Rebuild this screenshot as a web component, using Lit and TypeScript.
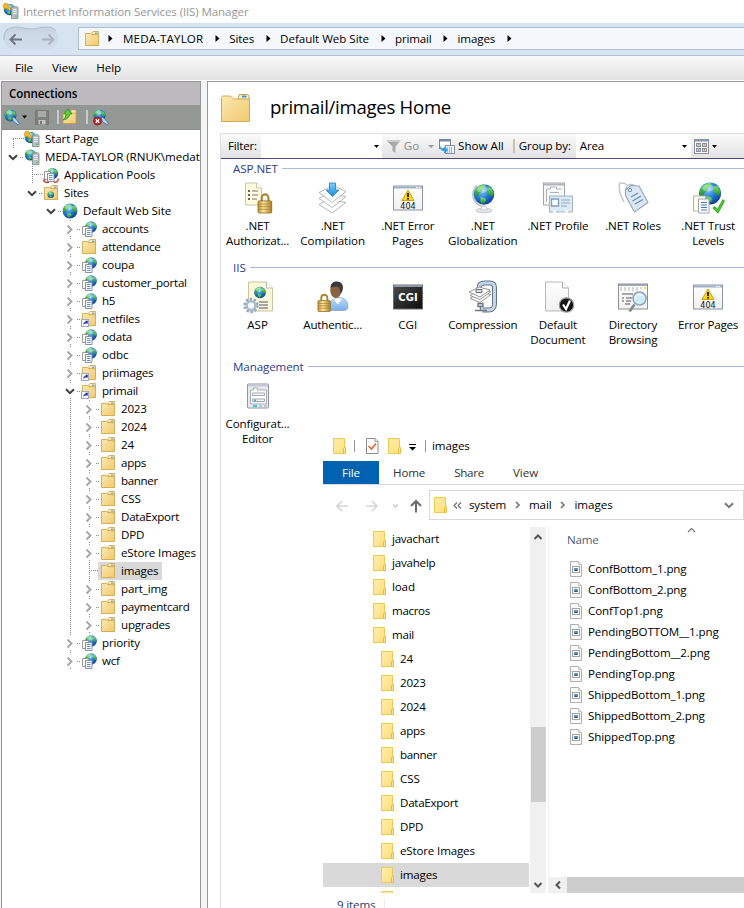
import { LitElement, html, css, svg, nothing } from "lit";
import { customElement, property } from "lit/decorators.js";

const ADV: Record<string, number> = {
  a: 509, b: 588, c: 462, d: 589, e: 523, f: 313, g: 589, h: 566, i: 242, j: 242, k: 497, l: 242, m: 861,
  n: 566, o: 586, p: 589, q: 589, r: 348, s: 424, t: 339, u: 566, v: 479, w: 723, x: 459, y: 484, z: 452,
  A: 645, B: 573, C: 619, D: 701, E: 506, F: 488, G: 686, H: 710, I: 266, J: 357, K: 580, L: 471, M: 898,
  N: 748, O: 754, P: 560, Q: 754, R: 598, S: 531, T: 524, U: 687, V: 621, W: 934, X: 590, Y: 553, Z: 570,
  " ": 274, ".": 217, ":": 217, "-": 400, _: 415, "/": 390, "\\": 380, "(": 302, ")": 302,
};

@customElement("ui-text")
class UiText extends LitElement {
  @property() t = "";
  @property({ type: Number }) size = 12;
  @property({ type: Number }) k = 1;
  static styles = css`
    :host { display: inline-block; white-space: pre; flex: none; }
    span { display: inline-block; }
  `;
  render() {
    return html`<span>${this.t}</span>`;
  }
  updated() {
    const s = this.renderRoot.querySelector("span") as HTMLElement;
    s.style.letterSpacing = "0";
    const want = ([...this.t].reduce((n, c) => n + (ADV[c] ?? 539), 0) * this.size * this.k) / 1000;
    const have = s.getBoundingClientRect().width;
    s.style.letterSpacing = (want - have) / this.t.length + "px";
  }
}

const T = (t: string, size = 12, k = 1) => html`<ui-text .t=${t} .size=${size} .k=${k}></ui-text>`;
const pic = (w: number, h: number, body: unknown) =>
  html`<svg class="pic" width=${w} height=${h} viewBox="0 0 ${w} ${h}">${body}</svg>`;

/* Unit globe drawn on a circle of radius 7 and placed by transform. */
const globe = (cx: number, cy: number, r: number) => svg`<g transform="translate(${cx} ${cy}) scale(${r / 7})">
  <circle r="7" fill="url(#sea)"/>
  <path d="M-6.2 -2.5 C-5 -5.5 -2 -7 .4 -6.7 L1 -5 L-1 -3.8 L-1.5 -1.6 L-3.6 -.6 L-4.2 1.4 L-6.4 1Z" fill="url(#land)"/>
  <path d="M2.4 -5 L5 -4.4 L6.6 -1.2 L5.8 1.4 L3.6 .6 L2.2 -1.4Z" fill="url(#land)"/>
  <path d="M-2.4 1.8 L.6 2.4 L1.6 4 L-.4 6.4 L-2.4 5.6Z" fill="url(#land)"/>
  <ellipse cx="-1.2" cy="-3.4" rx="3.6" ry="2.2" fill="#fff" opacity=".38"/></g>`;

const folderBody = svg`<path d="M8 1.500l1-1h5.500v3.500H8z" fill="#f9eab8" stroke="#c9a048" stroke-width=".8"/><path d="M11 2.200h2.500" stroke="#4a90d9"/>
  <path d="M1.500 2.500h5.200l1.300 1.200h6.500v10.800h-13z" fill="url(#fold)" stroke="#d0a850" stroke-width=".9"/>`;
const linkBadge = svg`<rect x=".5" y="8.500" width="7" height="7" fill="#f3f4fb" stroke="#a3a9c4"/><path d="M2.300 14c0-2 .8-3 2.200-3V9.800H6.800V12.500L5.500 12.400C3.500 12.300 2.900 12.900 2.300 14z" fill="#24339c"/>`;
const server = svg`<path d="M8.500 4.500l5-1 1.500 1v11l-6.500.2z" fill="#b9bec4" stroke="#7e868f" stroke-width=".8"/><path d="M10 6.500h3.600M10 8.500h3.600M10 10.500h3.600" stroke="#f2f4f6" stroke-width=".9"/><rect x="12" y="12.500" width="2" height="1.500" fill="#4fd44a"/>`;
const pages = (dy = 0) => svg`<g transform="translate(0 ${dy})"><path d="M1.500 5.500h6v8h-6z" fill="#fff" stroke="#8b9099" stroke-width=".9"/><path d="M4.500 7.500h6.500v8H4.500z" fill="#fff" stroke="#7f858e" stroke-width=".9"/><path d="M6 9.500h3.600M6 11.500h3.600M6 13.500h3.600" stroke="#4f82c4" stroke-width=".9"/></g>`;

const small: Record<string, unknown> = {
  start: svg`${globe(6.5, 6.5, 5.8)}<path d="M0 2.500L2 0l3 1 .5 2.500L8 6 6.500 7.500 3.600 5.200 1 5.500z" fill="#f6b92c" stroke="#c98410" stroke-width=".6"/>${server}`,
  server: svg`${globe(6.5, 6, 5.6)}${server}`,
  pools: svg`${globe(9.5, 6.5, 5.6)}${pages(-1)}<path d="M1.500 11.500C-.5 15 3 15.800 6 15.300M15 11.500c1 2.500-1 4-4 3.800" fill="none" stroke="#c64b3d" stroke-width="1.500"/>`,
  sites: svg`${folderBody}${globe(7.8, 9.8, 3.3)}`,
  globe: globe(8, 8, 7.4),
  app: svg`${globe(10, 6, 5.8)}${pages()}`,
  folder: folderBody,
  link: svg`${folderBody}${linkBadge}`,
};

type Node = [level: number, icon: string, text: string, state: "" | "o" | "c" | "s"];
const TREE: Node[] = [
  [0, "start", "Start Page", ""],
  [0, "server", "MEDA-TAYLOR (RNUK\\medataylor)", "o"],
  [1, "pools", "Application Pools", ""],
  [1, "sites", "Sites", "o"],
  [2, "globe", "Default Web Site", "o"],
  [3, "app", "accounts", "c"], [3, "folder", "attendance", "c"], [3, "app", "coupa", "c"],
  [3, "app", "customer_portal", "c"], [3, "app", "h5", "c"], [3, "link", "netfiles", "c"],
  [3, "app", "odata", "c"], [3, "app", "odbc", "c"], [3, "link", "priimages", "c"], [3, "link", "primail", "o"],
  ...["2023", "2024", "24", "apps", "banner", "CSS", "DataExport", "DPD", "eStore Images", "images", "part_img", "paymentcard", "upgrades"]
    .map((n): Node => [4, "folder", n, n === "images" ? "s" : "c"]),
  [3, "app", "priority", "c"], [3, "app", "wcf", "c"],
];

const errorPage = svg`<rect x="1.500" y="4.500" width="29" height="24" fill="url(#paper)" stroke="#8b94a5"/><path d="M2 6h28" stroke="#9fb0c9" stroke-width="2"/><path d="M24 6h1.500M26.500 6H28" stroke="#fff"/>
  <path d="M16 8.500l6 10.500H10z" fill="#fbd71e" stroke="#d2a000" stroke-linejoin="round"/><path d="M16 11.500v4" stroke="#1b1b1b" stroke-width="1.800"/><circle cx="16" cy="17.300" r="1" fill="#1b1b1b"/>
  <text x="16" y="27.300" text-anchor="middle" font-size="8" font-family="DejaVu Sans, sans-serif" fill="#111">404</text>`;
const lock = svg`<path d="M4.500 8V5a3.200 3.200 0 0 1 6.400 0V8" fill="none" stroke="#a9822d" stroke-width="2"/><rect x="1" y="8" width="13" height="11.500" rx="1" fill="url(#gold)" stroke="#8f6a1d" stroke-width=".8"/><path d="M1 11h13M1 13.500h13M1 16h13" stroke="#a27a24" stroke-width=".7"/>`;

const big: Record<string, unknown> = {
  auth: svg`<path d="M3.500 1.500h11l5 5v17h-16z" fill="#fff9df" stroke="#c9c5a8"/><path d="M14.500 1.500v5h5" fill="#fff" stroke="#c9c5a8"/><path d="M6 9.500h2M6 13.500h2M6 17.500h2" stroke="#333" stroke-width="1.700"/><path d="M10 9.500h6M10 13.500h6M10 17.500h5" stroke="#777"/><g transform="translate(15 11) scale(1.050)">${lock}</g>`,
  comp: svg`<g stroke="#a9acb0" fill="#fff" stroke-width=".9" stroke-linejoin="round"><path d="M2 23l9-5 18 3-14 10.500z"/><path d="M2 17l9-5 18 3-14 11z"/><path d="M2 11l14-7 13 6-14 11z"/></g><path d="M12.500 1.500h6v7h3.500L15.500 15 9 8.500h3.500z" fill="url(#arrow)" stroke="#2f86bd" stroke-width=".9"/>`,
  error: errorPage,
  globalz: svg`<path d="M10 4A12 12 0 0 0 18 25" fill="none" stroke="#c3c6cb" stroke-width="2"/>${globe(17, 13, 10.2)}<ellipse cx="17" cy="29" rx="8" ry="2.300" fill="#e3e5e8" stroke="#b9bcc1" stroke-width=".7"/><path d="M15 24.500h4l1.500 4h-7z" fill="#f2f3f4" stroke="#b9bcc1" stroke-width=".6"/>`,
  profile: svg`<rect x="1.500" y="1.500" width="21" height="22" fill="#f7f8f8" stroke="#a3a7ac"/><path d="M2 3h20" stroke="#b1b6bb" stroke-width="2"/><path d="M4.500 7.500h4v-2h6v2h5M4.500 7.500v13M8 11h9M8 15h4M8 18h3" fill="none" stroke="#b0b4b9"/><rect x="7.500" y="14.500" width="23" height="16" fill="#dceaf5" stroke="#a5b4c2"/><path d="M9.500 17.500h7v7h-7z" fill="#fff" stroke="#83a0ba" stroke-width="1.400"/><path d="M19 18.500h9M19 21.500h9M19 24.500h6" stroke="#93a8ba"/><path d="M11 30h3M23 30h3" stroke="#fff" stroke-width="2"/>`,
  roles: svg`<path d="M2.500 2c3-1 6 0 8 2M2.500 2C1 8 4 15 7 20.500M9 12V6c1-3 4-4 9-2" fill="none" stroke="#c3c6c9" stroke-width="1.500"/><path d="M8.500 8.500l5-4.500 8.500.5 9 16.500-13.500 9.500L8.500 14z" fill="#d9e8f4" stroke="#93a6b8" stroke-width="1.100"/><circle cx="13" cy="8.500" r="1.700" fill="#fff" stroke="#6d89a3"/><path d="M14 15.500l7-4M15.500 19.500l8.500-5M18 22.500l8-4.500" stroke="#6f8cad" stroke-width="1.300"/>`,
  trust: svg`${globe(18, 12, 11)}<path d="M1.500 14.500h12v15h-12z" fill="#fffbee" stroke="#b8b09d"/><path d="M6.500 17.500h10.500v14H6.500z" fill="#fff" stroke="#9fa4ab"/><path d="M9 21h6M9 23.500h6M9 26h6M9 28.500h6" stroke="#3f7ac7"/><path d="M21 26.500l2-1.500 2.500 3L31 18l1.500 1.500L26 31.500z" fill="#45d22e" stroke="#1d9415" stroke-width=".8"/>`,
  asp: svg`<path d="M6.500 1.500h18l6 6v23h-24z" fill="#fdf7d9" stroke="#c9c3a3"/><path d="M24.500 1.500v6h6" fill="#fff" stroke="#b9b8ae"/>${globe(18, 12, 5.8)}<path d="M17 21.500h9M17 24.500h9M17 27.500h9" stroke="#53507e"/><circle cx="9" cy="25" r="6.200" fill="none" stroke="#8fa7bd" stroke-width="3" stroke-dasharray="2.200 1.700"/><circle cx="9" cy="25" r="4.300" fill="#fff" stroke="#a4bbd0" stroke-width="2.400"/>`,
  authn: svg`<path d="M12 30v-6c1-4 5-7 10-7 6 0 9 4 9 9 0 3-2 4-5 4z" fill="url(#shirt)" stroke="#6e9cca" stroke-width=".6"/><path d="M16 18h9l-4 6z" fill="#fff"/><ellipse cx="18.800" cy="9.500" rx="5.600" ry="8" fill="#8a6242"/><path d="M13.500 7C14 2 17 .8 20 1c5 0 7 4 5.500 9l-2 4c0-4-1-7-3-8z" fill="#3b3b3b"/><g transform="translate(0 12.500) scale(.95)">${lock}</g>`,
  cgi: svg`<rect x="1.500" y="4.500" width="29" height="24" fill="url(#dark)" stroke="#6a6a6a"/><path d="M2 5.500h28" stroke="#8f98a8" stroke-width="2"/><text x="16" y="20" text-anchor="middle" font-size="10" font-weight="bold" font-family="DejaVu Sans, sans-serif" fill="#fff">CGI</text>`,
  compress: svg`<path d="M12 10V7c0-3 2-4.500 6-4.500h5c3 0 4.500 1.500 4.500 4.500v16c0 5-2 6.500-6 6.500h-6" fill="none" stroke="#60758f" stroke-width="5"/><path d="M12 10V7c0-3 2-4.500 6-4.500h5c3 0 4.500 1.500 4.500 4.500v16c0 5-2 6.500-6 6.500h-6" fill="none" stroke="#c5d5e5" stroke-width="3"/><g fill="#fff" stroke="#8a8a8a" stroke-width=".9"><path d="M3 18l10-6 11 2-11 8z"/><path d="M3 15l10-6 11 2-11 8z"/><path d="M2 11.500l10-5 11 3-10 7z"/></g><path d="M9 9h6v3H9z" fill="#d5dce3" stroke="#68717c"/><path d="M11 23h5v3h-5zM13.500 26v4M8 30h12" stroke="#6b7784" fill="#dbe1e8" stroke-width="1.400"/>`,
  doc: svg`<path d="M3.500 1.500h17l6 6v23h-23z" fill="url(#paper)" stroke="#b9b9b9"/><path d="M20.500 1.500v6h6" fill="#fff" stroke="#a9a9a9"/><circle cx="24.500" cy="24.500" r="7.200" fill="#151515" stroke="#999" stroke-width="1.200"/><path d="M21 24l3 4.500L28 20" fill="none" stroke="#fff" stroke-width="2.200"/>`,
  browse: svg`<rect x="1.500" y="3.500" width="29" height="25" fill="url(#paper)" stroke="#8b8f93"/><path d="M2 4.500h28" stroke="#9da6b2" stroke-width="2"/><path d="M3 7.500h22M3 9.500h18" stroke="#b0b0b0" stroke-width="1.200" stroke-dasharray="2 2"/><circle cx="28" cy="7.500" r="1.300" fill="#ffd83a"/><path d="M5 13.500h11M5 17.500h2M9 17.500h6M5 20.500h2M9 20.500h5M8 23.500h5" stroke="#555" stroke-width="1.200"/><path d="M17.500 24l-5 7" stroke="#85898e" stroke-width="2.600"/><circle cx="22.500" cy="18" r="6.500" fill="#d0ebfb" stroke="#93a5b3" stroke-width="1.500"/><path d="M18.500 17c1-3 4-4 7-2" fill="none" stroke="#fff" stroke-width="1.500"/>`,
  config: svg`<rect x="5.500" y="4.500" width="21" height="24" rx="1" fill="#e6ebf0" stroke="#8f969e"/><path d="M6 6h20" stroke="#c5cbd2" stroke-width="2"/><path d="M8.500 10.500h3v-2h4v2h9v14h-16z" fill="#fff" stroke="#a5acb3"/><path d="M10.500 13.500h12v2.500h-12zM10.500 19.500h12v2.500h-12z" fill="#f4f6f8" stroke="#a0a9b3"/><path d="M12 20.700h2" stroke="#1db5f0" stroke-width="1.500"/><path d="M11 26.500h4" stroke="#00b9f2" stroke-width="1.500"/><path d="M17 26.500h3M22 26.500h3" stroke="#b4babf" stroke-width="1.500"/>`,
};

const GROUPS: [string, [string, string[]][]][] = [
  ["ASP.NET", [["auth", [".NET", "Authorizat..."]], ["comp", [".NET", "Compilation"]], ["error", [".NET Error", "Pages"]], ["globalz", [".NET", "Globalization"]], ["profile", [".NET Profile"]], ["roles", [".NET Roles"]], ["trust", [".NET Trust", "Levels"]]]],
  ["IIS", [["asp", ["ASP"]], ["authn", ["Authentic..."]], ["cgi", ["CGI"]], ["compress", ["Compression"]], ["doc", ["Default", "Document"]], ["browse", ["Directory", "Browsing"]], ["error", ["Error Pages"]]]],
  ["Management", [["config", ["Configurat...", "Editor"]]]],
];

const exFolder = html`<svg class="pic" width="13" height="16" viewBox="0 0 13 16"><path d="M.5.500h11v15H.5z" fill="url(#exf)" stroke="#eccb52"/><path d="M10.500 15.500v-5l1-1h1v6z" fill="#ffe590" stroke="#e5bd3d"/></svg>`;
const EX_TREE: [number, string][] = [
  ...["javachart", "javahelp", "load", "macros", "mail"].map((n): [number, string] => [0, n]),
  ...["24", "2023", "2024", "apps", "banner", "CSS", "DataExport", "DPD", "eStore Images", "images", ""].map((n): [number, string] => [1, n]),
];
const FILES = ["ConfBottom_1.png", "ConfBottom_2.png", "ConfTop1.png", "PendingBOTTOM__1.png", "PendingBottom__2.png", "PendingTop.png", "ShippedBottom_1.png", "ShippedBottom_2.png", "ShippedTop.png"];
const fileIcon = pic(12, 16, svg`<path d="M.5.500h8l3 3v12H.5z" fill="#f9f9f9" stroke="#b0b0b0"/><path d="M8.500 .5v3h3" fill="#e4e4e4" stroke="#c4c4c4"/><rect x="2.500" y="5.500" width="7" height="6" fill="#fff" stroke="#a2a2a2"/><rect x="4" y="7" width="4" height="3" fill="#5b93c4"/><path d="M4 10l2-1.500L8 10z" fill="#2d5a58"/>`);

const play = pic(26, 9, svg`<path d="M12.500 1l4 3.500-4 3.500z" fill="#000"/>`);
const chevDown = (c: string) => pic(10, 7, svg`<path d="M1 1.200l4 4 4-4" fill="none" stroke=${c} stroke-width="2"/>`);
const chevRight = pic(7, 9, svg`<path d="M1.500 .5l4 4-4 4" fill="none" stroke="#a6a6a6" stroke-width="1.900"/>`);
const plugGlobe = svg`${globe(6.5, 6.5, 6)}<path d="M8 8l3 1 2.500 3 2 2.500-1.500 1.200-2.800-2L9 12z" fill="#b9d4ec" stroke="#4276a9" stroke-width=".9"/>`;

@customElement("app-root")
class AppRoot extends LitElement {
  static styles = css`
    :host { display: block; width: 744px; height: 908px; overflow: hidden; position: relative; background: #fff; color: #000;
      font: 11.6px/18px "Open Sans", "Noto Sans", sans-serif; }
    * { box-sizing: border-box; }
    .pic { display: block; flex: none; overflow: visible; }
    .defs { position: absolute; }
    .title, .address, .crumbs, .menu, .tools, .filter { display: flex; align-items: center; }
    .title { height: 23px; padding: 0 0 0 3px; gap: 4px; color: #979797; }
    .address { height: 33px; background: #d6e3f1; border-bottom: 1px solid #b0bfd2; }
    .nav { width: 78px; display: flex; align-items: center; }
    .crumbs { flex: 1; height: 23px; margin-bottom: 1px; padding-left: 5px; border: 1px solid #afbfd6; border-right: 0; background: #f4f8fc; }
    .menu { height: 25px; padding-left: 15px; background: linear-gradient(#fafafa, #e3e2e3); border-bottom: 1px solid #fff; }
    .menu ui-text { margin-right: 19px; }
    .body { display: flex; height: 827px; background: #f5f4f5; padding-left: 1px; }
    .left { width: 200px; border: 1px solid #939793; border-bottom: 0; background: #fff; overflow: hidden; }
    .head { height: 23px; line-height: 23px; padding-left: 7px; font-weight: 600; background: #bcbabc; }
    .tools { height: 25px; background: #949894; padding-left: 2px; border-bottom: 1px solid #8a8d8a; }
    .trow { display: flex; align-items: center; height: 18px; padding-left: 2px; }
    .cell { width: 19px; height: 18px; flex: none; }
    .vline { background: repeating-linear-gradient(#888 0 1px, transparent 1px 2px) 9px 0 / 1px 100% no-repeat; }
    .own { width: 20px; height: 18px; flex: none; display: flex; align-items: center; }
    .tog { width: 16px; height: 14px; display: flex; align-items: center; justify-content: center; background: #fff; padding: 1px 0 0 1px; }
    .own.c { background: repeating-linear-gradient(#888 0 1px, transparent 1px 2px) 9px 0 / 1px 100% no-repeat; }
    .own.leaf { background: repeating-linear-gradient(#888 0 1px, transparent 1px 2px) 9px 0 / 1px 100% no-repeat,
      repeating-linear-gradient(90deg, #888 0 1px, transparent 1px 2px) 9px 8px / 11px 1px no-repeat; }
    .own.first { background: repeating-linear-gradient(#888 0 1px, transparent 1px 2px) 9px 9px / 1px 9px no-repeat,
      repeating-linear-gradient(90deg, #888 0 1px, transparent 1px 2px) 9px 8px / 11px 1px no-repeat; }
    .hd { width: 4px; height: 1px; background: repeating-linear-gradient(90deg, #888 0 1px, transparent 1px 2px); }
    .node { display: flex; align-items: center; gap: 5px; height: 18px; padding-right: 4px; }
    .node.sel { background: #d9d9d9; margin-left: -2px; padding-left: 2px; }
    .right { flex: 1; margin-left: 6px; border: solid #999; border-width: 1px 0 0 1px; background: #fff; padding-left: 12px; overflow: hidden; }
    .hero { display: flex; align-items: center; height: 51px; gap: 19px; }
    .big { font-size: 18.6px; line-height: 24px; margin-bottom: 2px; }
    .pane { border: 1px solid #dedede; border-right: 0; height: 790px; }
    .filter { height: 25px; background: linear-gradient(#fbfbfb, #e3e1e3); border-bottom: 1px solid #48477a; padding-left: 7px; }
    .combo { display: flex; align-items: center; justify-content: flex-end; height: 24px; background: #fff; }
    .grow { flex: 1; }
    .dis { color: #8a8a8a; }
    .group { height: 99px; }
    .gh { display: flex; align-items: center; height: 20px; padding-left: 12px; gap: 4px; color: #2b3a8c; }
    .rule { flex: 1; height: 1px; background: #a9b9dd; margin-bottom: 1px; }
    .items { display: flex; padding-top: 2px; margin-left: -1px; }
    .item { width: 75.100px; flex: none; display: flex; flex-direction: column; align-items: center; line-height: 15px; }
    .item .pic { margin-bottom: 4px; }
    .ex { position: absolute; left: 317px; top: 434px; width: 427px; height: 474px; background: #fff; padding-left: 6px; }
    .qat { display: flex; align-items: center; height: 27px; padding: 0 0 3px 10px; }
    .bar { width: 1px; height: 12px; background: #999; }
    .tabs { display: flex; height: 24px; line-height: 24px; border-bottom: 1px solid #dadada; color: #333; }
    .file { width: 56px; height: 23px; background: #0063b1; color: #fff; text-align: center; margin-right: -15px; }
    .tabs .tab { margin-left: 29px; }
    .loc { display: flex; align-items: center; height: 41px; }
    .arrows { width: 106px; display: flex; align-items: center; padding-left: 13px; }
    .path { flex: 1; height: 30px; margin-bottom: 1px; border: 1px solid #d9d9d9; display: flex; align-items: center; padding: 0 9px 0 4px; }
    .path .gt { margin: 0 8px 0 9px; }
    .cols { display: flex; height: 367px; padding-top: 1px; }
    .etree { width: 207px; height: 366px; overflow: hidden; }
    .erow { display: flex; align-items: center; height: 24px; gap: 6px; width: 206px; }
    .l0 { padding-left: 50px; } .l1 { padding-left: 58px; }
    .erow.sel { background: #d9d9d9; }
    .vs { width: 16px; height: 366px; background: #f0f0f0; display: flex; flex-direction: column; align-items: center; padding: 7px 0 5px; }
    .vt { width: 15px; height: 75px; margin-top: 187px; background: #cdcdcd; }
    .list { flex: 1; margin-left: 2px; border-left: 1px solid #f0f0f0; display: flex; flex-direction: column; }
    .lh { height: 31px; padding: 0 48px 0 18px; display: flex; justify-content: space-between; color: #4c607a; line-height: 26px; }
    .frow { display: flex; align-items: center; gap: 6px; height: 21px; padding-left: 21px; }
    .hs { display: flex; align-items: center; height: 16px; margin-top: auto; background: #cdcdcd; }
    .hb { width: 18px; height: 16px; display: flex; align-items: center; justify-content: center; background: #f0f0f0; }
    .status { display: flex; padding: 3px 0 0 14px; color: #1e3c6e; height: 22px; }
    .status .bar { margin: 3px 0 0 9px; background: #ececec; }
  `;

  node([lv, ic, text, st]: Node, i: number) {
    return html`<div class="trow">
      ${Array.from({ length: lv }, (_, n) => html`<span class="cell ${n === 3 ? "vline" : ""}"></span>`)}
      ${st === "" || st === "s"
        ? html`<span class="own ${i === 0 ? "first" : "leaf"}"></span>`
        : html`<span class="own ${lv > 2 ? "c" : ""}"><span class="tog">${st === "o" ? chevDown("#404040") : chevRight}</span><span class="hd"></span></span>`}
      <span class="node ${st === "s" ? "sel" : ""}">${pic(16, 16, small[ic])}${T(text, 12, 0.99)}</span>
    </div>`;
  }

  render() {
    return html`
      <svg class="defs" width="0" height="0"><defs>
        <radialGradient id="sea" cx=".4" cy=".3" r=".8"><stop offset="0" stop-color="#8ad0fb"/><stop offset=".5" stop-color="#2476d6"/><stop offset="1" stop-color="#0a2f8c"/></radialGradient>
        <linearGradient id="land" x1="0" y1="0" x2="0" y2="1"><stop offset="0" stop-color="#7be26a"/><stop offset="1" stop-color="#1f8f2c"/></linearGradient>
        <linearGradient id="fold" x1="0" y1="0" x2="1" y2="1"><stop offset="0" stop-color="#fce9b0"/><stop offset="1" stop-color="#f0c96f"/></linearGradient>
        <linearGradient id="exf" x1="0" y1="0" x2="1" y2="1"><stop offset="0" stop-color="#ffedab"/><stop offset="1" stop-color="#ffe07a"/></linearGradient>
        <linearGradient id="paper" x1="0" y1="0" x2="0" y2="1"><stop offset="0" stop-color="#fff"/><stop offset="1" stop-color="#f0f0f0"/></linearGradient>
        <linearGradient id="gold"><stop offset="0" stop-color="#c8973a"/><stop offset=".4" stop-color="#fbe6a0"/><stop offset="1" stop-color="#b07f28"/></linearGradient>
        <linearGradient id="arrow" x1="0" y1="0" x2="0" y2="1"><stop offset="0" stop-color="#7fd0fb"/><stop offset="1" stop-color="#188ade"/></linearGradient>
        <linearGradient id="shirt" x1="0" y1="0" x2="0" y2="1"><stop offset="0" stop-color="#bcdcf8"/><stop offset="1" stop-color="#79aee4"/></linearGradient>
        <linearGradient id="dark" x1="0" y1="0" x2="1" y2="1"><stop offset="0" stop-color="#4c4c4c"/><stop offset="1" stop-color="#0c0c0c"/></linearGradient>
        <linearGradient id="navg" x1="0" y1="0" x2="0" y2="1"><stop offset="0" stop-color="#c3d1e0"/><stop offset=".4" stop-color="#cedae7"/><stop offset="1" stop-color="#d0dce9"/></linearGradient>
      </defs></svg>
      <div class="title">${pic(16, 17, small.start)}${T("Internet Information Services (IIS) Manager", 12, 0.995)}</div>
      <div class="address">
        <div class="nav">${pic(60, 30, svg`<path d="M4 15C4 6 9 3 16 3c7 0 9 2 15 2s9-2 15-2c8 0 12 5 12 11s-4 11-11 11H16C8 25 4 22 4 15z" fill="url(#navg)"/><path d="M4 16C3.500 6 9 3 16 3c7 0 9 2 15 2s9-2 15-2c5 0 8 1 10 4" fill="none" stroke="#b3c0cf" stroke-width="1.200"/>
          <path d="M22 15.500H11M15.500 10.500l-5 5 5 5" fill="none" stroke="#6f7880" stroke-width="2"/><path d="M42 15.500h11M48.500 10.500l5 5-5 5" fill="none" stroke="#a9b3bd" stroke-width="1.800"/>`)}</div>
        <div class="crumbs">${pic(16, 16, folderBody)}${pic(23, 9, svg`<path d="M8.500 1l4 3.500-4 3.500z"/>`)}
          ${["MEDA-TAYLOR", "Sites", "Default Web Site", "primail", "images"].map((c) => html`${T(c)}${play}`)}</div>
      </div>
      <div class="menu">${T("File")}${T("View")}${T("Help")}</div>
      <div class="body">
        <div class="left">
          <div class="head">${T("Connections", 12, 1.04)}</div>
          <div class="tools">
            ${pic(16, 16, plugGlobe)}${pic(15, 4, svg`<path d="M2 .5h5L4.500 3.500z"/>`)}
            ${pic(14, 15, svg`<path d="M.5.500h13v14H.5z" fill="#7f817f" stroke="#767876"/><path d="M3 1h8v6H3z" fill="#a9aba9"/><path d="M3.500 10h7v4.500h-7z" fill="#c3c4c3"/><path d="M5 11h2v3H5z" fill="#777"/>`)}
            <svg class="pic" width="13" height="14"><path d="M9 0v14" stroke="#fff"/></svg>
            ${pic(16, 16, svg`<path d="M1 3.500h13v11H1z" fill="url(#fold)" stroke="#c79c48" stroke-width=".8"/><path d="M9 1h5v3H9z" fill="#fbf0c8" stroke="#c79c48" stroke-width=".7"/><path d="M1 11c2-2 3-3 3-6H1.500L6 0l4 5H7.500C7.500 8 5 10.500 1 11z" fill="#5fd03c" stroke="#228a1b" stroke-width=".8"/>`)}
            <svg class="pic" width="15" height="14"><path d="M9 0v14" stroke="#fff"/></svg>
            ${pic(16, 16, svg`${plugGlobe}<circle cx="4.500" cy="12" r="4" fill="#c9252b" stroke="#8d1015" stroke-width=".7"/><path d="M2.800 10.300l3.400 3.400M6.200 10.300l-3.400 3.400" stroke="#fff" stroke-width="1.300"/>`)}
          </div>
          ${TREE.map((n, i) => this.node(n, i))}
        </div>
        <div class="right">
          <div class="hero">
            ${pic(31, 30, svg`<path d="M19 1.500h8.500l1.500 1v4H18z" fill="#f9ecbd" stroke="#c8a557"/><path d="M22 3.500h4.500" stroke="#4594dc" stroke-width="2"/><path d="M1.500 4.500L2.500 3h8l3 3H29.500v22.500h-28z" fill="url(#fold)" stroke="#d1aa55"/>`)}
            <span class="big">${T("primail/images Home", 19)}</span>
          </div>
          <div class="pane">
            <div class="filter">
              ${T("Filter:")}<svg class="pic" width="4" height="2"></svg><span class="combo" style="width:121px"><svg class="pic" width="8" height="3"><path d="M0 0h5L2.500 3z"/></svg></span>
              <svg class="pic" width="2" height="2"></svg>
              ${pic(20, 16, svg`<path d="M2.500 2.500h14l-5 6v6.500l-3-2V8.500z" fill="#a9a9a9"/><path d="M2.500 2.500h14l-1 1.500H4z" fill="#c9c9c9"/>`)}
              <span class="dis">${T("Go")}</span>
              ${pic(20, 3, svg`<path d="M9 0h6l-3 3z" fill="#999"/>`)}
              ${pic(16, 16, svg`<rect x=".5" y="1.500" width="11" height="9" fill="#fff" stroke="#7b8596"/><path d="M1 2.500h10" stroke="#7589a8" stroke-width="2"/><rect x="6.500" y="7.500" width="9" height="8" fill="#eef2f8" stroke="#8591a5"/><path d="M8 10h6M8 12h6M8 14h6" stroke="#5b7cba" stroke-dasharray="1 1"/><path d="M1 6c0 4 2 5 4 5V8.500L9 12l-4 3.500V13C2 13 0 10 1 6z" fill="#2b9fe6"/>`)}
              <svg class="pic" width="3" height="2"></svg>${T("Show All")}
              <svg class="pic" width="15" height="14"><path d="M10 0v14" stroke="#c3c3b0" stroke-width="2"/></svg>${T("Group by:")}
              <svg class="pic" width="5" height="2"></svg>
              <span class="combo" style="width:115px"><svg class="pic" width="4" height="2"></svg>${T("Area")}<span class="grow"></span><svg class="pic" width="9" height="3"><path d="M0 0h5L2.500 3z"/></svg></span>
              <svg class="pic" width="3" height="2"></svg>
              ${pic(15, 15, svg`<rect x=".5" y=".5" width="14" height="14" fill="#f7f7f7" stroke="#8b8f96"/><path d="M1 1.500h13" stroke="#8d99ad" stroke-width="2"/><g fill="#cfd4dc" stroke="#8a8f99"><rect x="2.500" y="4.500" width="4" height="3"/><rect x="8.500" y="4.500" width="4" height="3"/><rect x="2.500" y="9.500" width="4" height="3"/><rect x="8.500" y="9.500" width="4" height="3"/></g><path d="M4 6h1" stroke="#5a9a3a"/><path d="M10 6h1" stroke="#d08a2a"/><path d="M4 11h1" stroke="#4a62c8"/><path d="M10 11h1" stroke="#c8503a"/>`)}
              <svg class="pic" width="9" height="3"><path d="M3 0h5L5.500 3z"/></svg>
            </div>
            ${GROUPS.map(([name, items]) => html`<div class="group">
              <div class="gh">${T(name)}<span class="rule"></span></div>
              <div class="items">${items.map(([ic, lines]) => html`<div class="item">${pic(32, 33, svg`<g transform="translate(0 .5)">${big[ic]}</g>`)}${lines.map((l) => T(l))}</div>`)}</div>
            </div>`)}
          </div>
        </div>
      </div>
      <div class="ex">
        <div class="qat">${exFolder}<svg class="pic" width="20" height="12"><path d="M8.500 0v12" stroke="#999"/></svg>
          ${pic(13, 16, svg`<path d="M.5.500h8.500l3 3v12H.5z" fill="#fff" stroke="#8b8b8b"/><path d="M9 .5v3h3" fill="#eee" stroke="#999"/><path d="M2.500 8l3 3L10 5.500" fill="none" stroke="#f0652b" stroke-width="1.700"/>`)}
          <svg class="pic" width="9" height="2"></svg>${exFolder}
          <svg class="pic" width="31" height="12"><path d="M8 4.500h7" stroke="#000"/><path d="M8 7h7l-3.500 3.500z"/><path d="M24.500 0v12" stroke="#999"/></svg>
          ${T("images")}</div>
        <div class="tabs"><span class="file">${T("File")}</span>${["Home", "Share", "View"].map((t) => html`<span class="tab">${T(t)}</span>`)}</div>
        <div class="loc">
          <div class="arrows">${pic(88, 14, svg`<g fill="none" stroke-width="1.700"><path d="M12 7H1M6 2L1 7l5 5M30 7h11M36 2l5 5-5 5" stroke="#d5d5d5"/><path d="M57 5.500l2.500 2.500L62 5.500" stroke="#cfcfcf"/><path d="M80 13.500V2M75 7l5-5 5 5" stroke="#6b6b6b" stroke-width="2"/></g>`)}</div>
          <div class="path">${exFolder}${pic(22, 9, svg`<path d="M10 1.500l-3 3 3 3M14 1.500l-3 3 3 3" fill="none" stroke="#666" stroke-width="1.100"/>`)}
            ${["system", "mail", "images"].map((c, i) => html`${i ? html`<svg class="pic gt" width="6" height="8"><path d="M1 1l3 3-3 3" fill="none" stroke="#777" stroke-width="1.700"/></svg>` : nothing}${T(c, 12, 1.01)}`)}
            <span class="grow"></span>${chevDown("#777")}</div>
        </div>
        <div class="cols">
          <div class="etree">${EX_TREE.map(([l, n]) => html`<div class="erow l${l} ${l && n === "images" ? "sel" : ""}">${exFolder}${n ? T(n, 12, 0.99) : nothing}</div>`)}</div>
          <div class="vs">${pic(8, 6, svg`<path d="M.5 5L4 1.500 7.500 5" fill="none" stroke="#555" stroke-width="2"/>`)}<span class="vt"></span><span class="grow"></span>${pic(8, 6, svg`<path d="M.5 1L4 4.500 7.500 1" fill="none" stroke="#555" stroke-width="2"/>`)}</div>
          <div class="list">
            <div class="lh">${T("Name")}${pic(9, 6, svg`<path d="M1 5l3.500-3.500L8 5" fill="none" stroke="#777" stroke-width="1.200"/>`)}</div>
            ${FILES.map((f) => html`<div class="frow">${fileIcon}${T(f, 12, 0.99)}</div>`)}
            <div class="hs"><span class="hb">${pic(6, 8, svg`<path d="M5 .5L1.500 4 5 7.500" fill="none" stroke="#555" stroke-width="2"/>`)}</span></div>
          </div>
        </div>
        <div class="status">${T("9 items")}<span class="bar"></span></div>
      </div>`;
  }
}
